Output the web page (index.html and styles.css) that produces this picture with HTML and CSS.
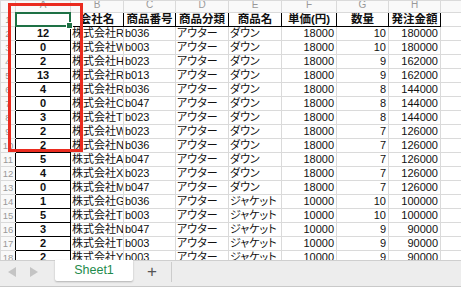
FILE: index.html
```html
<!DOCTYPE html>
<html lang="ja">

<head>
    <meta charset="UTF-8">
    <meta name="viewport" content="width=device-width, initial-scale=1.0">
    <title>Sheet1</title>
    <link rel="stylesheet" href="styles.css">
</head>

<body>

    <div class="sheet">
        <div class="grid-area">
            <table class="grid">
                <colgroup>
                    <col class="c-num">
                    <col class="c-a">
                    <col class="c-b">
                    <col class="c-c">
                    <col class="c-d">
                    <col class="c-e">
                    <col class="c-f">
                    <col class="c-g">
                    <col class="c-h">
                    <col class="c-i">
                </colgroup>
                <thead>
                    <tr class="col-heads">
                        <th class="corner"></th>
                        <th>A</th>
                        <th>B</th>
                        <th>C</th>
                        <th>D</th>
                        <th>E</th>
                        <th>F</th>
                        <th>G</th>
                        <th>H</th>
                        <th></th>
                    </tr>
                </thead>
                <tbody>
                    <tr>
                        <td class="row-num">1</td>
                        <td class="qty selected"><span class="handle"></span></td>
                        <td class="head">会社名</td>
                        <td class="head">商品番号</td>
                        <td class="head">商品分類</td>
                        <td class="head">商品名</td>
                        <td class="head">単価(円)</td>
                        <td class="head">数量</td>
                        <td class="head">発注金額</td>
                        <td></td>
                    </tr>
                    <tr><td class="row-num">2</td><td class="qty">12</td><td class="txt">株式会社R</td><td class="txt">b036</td><td class="txt">アウター</td><td class="txt">ダウン</td><td class="num">18000</td><td class="num">10</td><td class="num">180000</td><td></td></tr>
                    <tr><td class="row-num">3</td><td class="qty">0</td><td class="txt">株式会社W</td><td class="txt">b003</td><td class="txt">アウター</td><td class="txt">ダウン</td><td class="num">18000</td><td class="num">10</td><td class="num">180000</td><td></td></tr>
                    <tr><td class="row-num">4</td><td class="qty">2</td><td class="txt">株式会社H</td><td class="txt">b023</td><td class="txt">アウター</td><td class="txt">ダウン</td><td class="num">18000</td><td class="num">9</td><td class="num">162000</td><td></td></tr>
                    <tr><td class="row-num">5</td><td class="qty">13</td><td class="txt">株式会社R</td><td class="txt">b013</td><td class="txt">アウター</td><td class="txt">ダウン</td><td class="num">18000</td><td class="num">9</td><td class="num">162000</td><td></td></tr>
                    <tr><td class="row-num">6</td><td class="qty">4</td><td class="txt">株式会社R</td><td class="txt">b036</td><td class="txt">アウター</td><td class="txt">ダウン</td><td class="num">18000</td><td class="num">8</td><td class="num">144000</td><td></td></tr>
                    <tr><td class="row-num">7</td><td class="qty">0</td><td class="txt">株式会社C</td><td class="txt">b047</td><td class="txt">アウター</td><td class="txt">ダウン</td><td class="num">18000</td><td class="num">8</td><td class="num">144000</td><td></td></tr>
                    <tr><td class="row-num">8</td><td class="qty">3</td><td class="txt">株式会社T</td><td class="txt">b023</td><td class="txt">アウター</td><td class="txt">ダウン</td><td class="num">18000</td><td class="num">8</td><td class="num">144000</td><td></td></tr>
                    <tr><td class="row-num">9</td><td class="qty">2</td><td class="txt">株式会社W</td><td class="txt">b023</td><td class="txt">アウター</td><td class="txt">ダウン</td><td class="num">18000</td><td class="num">7</td><td class="num">126000</td><td></td></tr>
                    <tr><td class="row-num">10</td><td class="qty">2</td><td class="txt">株式会社N</td><td class="txt">b036</td><td class="txt">アウター</td><td class="txt">ダウン</td><td class="num">18000</td><td class="num">7</td><td class="num">126000</td><td></td></tr>
                    <tr><td class="row-num">11</td><td class="qty">5</td><td class="txt">株式会社A</td><td class="txt">b047</td><td class="txt">アウター</td><td class="txt">ダウン</td><td class="num">18000</td><td class="num">7</td><td class="num">126000</td><td></td></tr>
                    <tr><td class="row-num">12</td><td class="qty">4</td><td class="txt">株式会社X</td><td class="txt">b023</td><td class="txt">アウター</td><td class="txt">ダウン</td><td class="num">18000</td><td class="num">7</td><td class="num">126000</td><td></td></tr>
                    <tr><td class="row-num">13</td><td class="qty">0</td><td class="txt">株式会社M</td><td class="txt">b047</td><td class="txt">アウター</td><td class="txt">ダウン</td><td class="num">18000</td><td class="num">7</td><td class="num">126000</td><td></td></tr>
                    <tr><td class="row-num">14</td><td class="qty">1</td><td class="txt">株式会社G</td><td class="txt">b036</td><td class="txt">アウター</td><td class="txt">ジャケット</td><td class="num">10000</td><td class="num">10</td><td class="num">100000</td><td></td></tr>
                    <tr><td class="row-num">15</td><td class="qty">5</td><td class="txt">株式会社T</td><td class="txt">b003</td><td class="txt">アウター</td><td class="txt">ジャケット</td><td class="num">10000</td><td class="num">10</td><td class="num">100000</td><td></td></tr>
                    <tr><td class="row-num">16</td><td class="qty">3</td><td class="txt">株式会社N</td><td class="txt">b047</td><td class="txt">アウター</td><td class="txt">ジャケット</td><td class="num">10000</td><td class="num">9</td><td class="num">90000</td><td></td></tr>
                    <tr><td class="row-num">17</td><td class="qty">2</td><td class="txt">株式会社T</td><td class="txt">b003</td><td class="txt">アウター</td><td class="txt">ジャケット</td><td class="num">10000</td><td class="num">9</td><td class="num">90000</td><td></td></tr>
                    <tr><td class="row-num">18</td><td class="qty">2</td><td class="txt">株式会社Y</td><td class="txt">b003</td><td class="txt">アウター</td><td class="txt">ジャケット</td><td class="num">10000</td><td class="num">9</td><td class="num">90000</td><td></td></tr>
                </tbody>
            </table>

            <!-- red annotation box over column A -->
            <div class="highlight"></div>
        </div>

        <!-- Sheet tabs -->
        <div class="tab-bar">
            <div class="tab-nav">
                <span class="arrow arrow-left"></span>
                <span class="arrow arrow-right"></span>
            </div>
            <div class="tab">Sheet1</div>
            <div class="add-sheet">+</div>
        </div>
    </div>

</body>

</html>
```

FILE: styles.css
```css
html,
body {
    margin: 0;
    padding: 0;
}

body {
    width: 461px;
    height: 287px;
    overflow: hidden;
    background-color: #fff;
    font-family: "Liberation Sans", "Noto Sans CJK JP", sans-serif;
    color: #111;
}

.sheet {
    display: flex;
    flex-direction: column;
    height: 287px;
}

.grid-area {
    position: relative;
    flex: none;
    height: 260px;
    overflow: hidden;
}

.grid {
    table-layout: fixed;
    border-collapse: collapse;
    width: 480px;
}

.c-num { width: 15px; }
.c-a { width: 55px; }
.c-b { width: 53px; }
.c-c { width: 52px; }
.c-d { width: 53px; }
.c-e { width: 53px; }
.c-f { width: 55px; }
.c-g { width: 52px; }
.c-h { width: 52px; }
.c-i { width: 40px; }

.grid th,
.grid td {
    border: 1px solid #dadada;
    padding: 0 2px;
    white-space: nowrap;
    overflow: hidden;
    line-height: 13px;
}

.grid tbody tr {
    height: 14px;
}

.col-heads {
    height: 12px;
}

.col-heads th {
    font-weight: normal;
    font-size: 10px;
    line-height: 8px;
    vertical-align: top;
    color: #999;
    background-color: #f9f9f9;
    text-align: center;
}

.row-num {
    font-size: 9.5px;
    color: #999;
    background-color: #f9f9f9;
    text-align: center;
    border-right: none !important;
    padding: 0 !important;
}

.txt {
    font-size: 11px;
    padding-left: 1px !important;
    font-feature-settings: "palt";
    text-overflow: clip;
}

.num {
    font-size: 11px;
    text-align: right;
}

.head {
    font-size: 11.5px;
    font-weight: bold;
    text-align: center;
    border-color: #000 !important;
}

.qty {
    font-size: 11px;
    font-weight: bold;
    text-align: center;
    border-color: #000 !important;
}

.selected {
    position: relative;
    overflow: visible !important;
}

.selected::before {
    content: "";
    position: absolute;
    left: -1px;
    top: -1px;
    right: -1px;
    bottom: -1px;
    border: 2px solid #1e7145;
}

.handle {
    position: absolute;
    right: -3px;
    bottom: -3px;
    width: 5px;
    height: 5px;
    background-color: #1e7145;
    border: 1px solid #fff;
}

.highlight {
    position: absolute;
    left: 8px;
    top: 3px;
    width: 69px;
    height: 143px;
    border: 3px solid #ea2b1f;
}

/* bottom tab bar */
.tab-bar {
    flex: none;
    height: 27px;
    box-sizing: border-box;
    display: flex;
    align-items: flex-start;
    background-color: #ededed;
    border-top: 1px solid #cfcfcf;
    border-bottom: 1px solid #c9c9c9;
}

.tab-nav {
    display: flex;
    gap: 14px;
    width: 55px;
    padding: 6px 0 0 8px;
    box-sizing: border-box;
}

.arrow {
    width: 0;
    height: 0;
    border-top: 5px solid transparent;
    border-bottom: 5px solid transparent;
}

.arrow-left {
    border-right: 8px solid #c4c4c4;
}

.arrow-right {
    border-left: 8px solid #c4c4c4;
}

.tab {
    width: 78px;
    height: 21px;
    margin-top: -1px;
    background-color: #fff;
    color: #1f8b4c;
    font-size: 12.5px;
    line-height: 21px;
    text-align: center;
    box-shadow: 0 1px 2px rgba(0, 0, 0, 0.25);
    border-radius: 0 0 2px 2px;
}

.add-sheet {
    width: 38px;
    height: 20px;
    margin-top: 1px;
    border-right: 1px solid #cccccc;
    font-size: 17px;
    line-height: 19px;
    text-align: center;
    color: #555;
}
```
